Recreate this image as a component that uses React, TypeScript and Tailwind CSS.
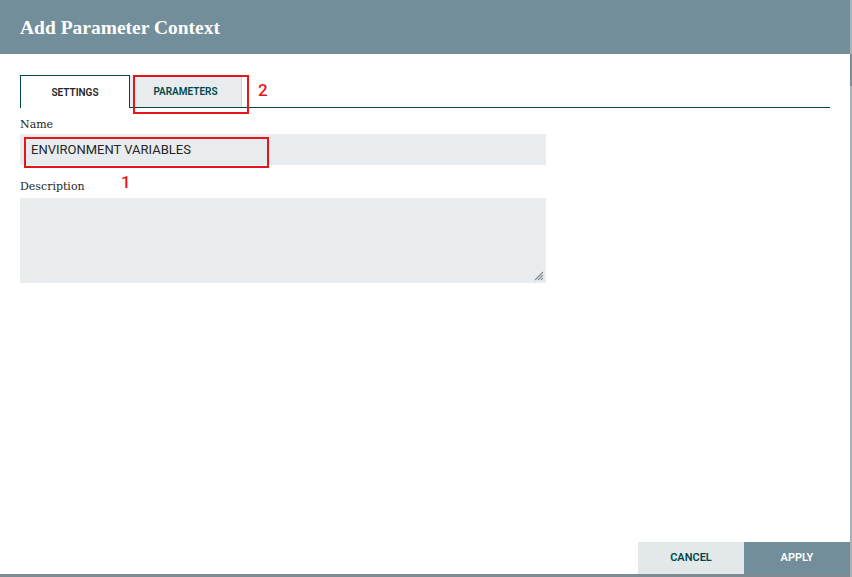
export default function App() {
  return (
    <div className="flex h-[577px] w-[852px] overflow-hidden bg-white font-['Roboto',sans-serif] text-[#262626]">
      <div className="flex flex-1 flex-col">
        <header className="flex h-[54px] items-center bg-[#728e9b] px-5 pt-[2px]">
          <h1 className="font-['Liberation_Serif',serif] text-[19.5px] font-bold text-white">
            Add Parameter Context
          </h1>
        </header>

        <main className="relative flex-1 pl-5 pr-[20px] pt-[21px]">
          <div className="flex h-[33px]">
            <div className="flex w-[110px] items-center justify-center border border-b-0 border-[#004849] bg-white text-[10px] font-semibold">
              SETTINGS
            </div>
            <div className="flex flex-1 flex-col">
              <div className="flex flex-1 items-start">
                <div className="flex h-[32px] w-[112px] items-center justify-center border-r border-[#cfd3d6] bg-[#e9ecee] text-[10px] font-semibold text-[#004849]">
                  PARAMETERS
                </div>
              </div>
              <div className="h-px bg-[#004849]" />
            </div>
          </div>

          <label className="mt-[9px] block font-['DejaVu_Serif',serif] text-[11px] leading-[16px]">Name</label>
          <div className="mt-[1px] flex h-[31px] w-[526px] items-center bg-[#e9ecef] px-[11px] text-[13px]">
            ENVIRONMENT VARIABLES
          </div>

          <label className="mt-[14px] block font-['DejaVu_Serif',serif] text-[11px] leading-[16px]">Description</label>
          <div className="relative mt-[3px] h-[85px] w-[526px] bg-[#e9ecef]">
            <svg className="absolute bottom-[2px] right-[2px]" width="10" height="10" viewBox="0 0 10 10">
              <path d="M9 1L1 9M9 4L4 9M9 7L7 9" stroke="#8a8f93" strokeWidth="1.2" />
            </svg>
          </div>

          <div className="absolute left-[133px] top-[21px] h-[39px] w-[116px] border-2 border-[#e8141c]" />
          <span className="absolute left-[258px] top-[24px] text-[17px] font-medium text-[#e8141c]">2</span>
          <div className="absolute left-[24px] top-[83px] h-[31px] w-[245px] border-2 border-[#e8141c]" />
          <span className="absolute left-[121px] top-[116px] text-[17px] font-medium text-[#e8141c]">1</span>
        </main>

        <footer className="flex justify-end">
          <button className="h-[32px] w-[106px] bg-[#e3e8eb] text-[11px] font-semibold text-[#004849]">CANCEL</button>
          <button className="h-[32px] w-[106px] bg-[#728e9b] text-[11px] font-semibold text-white">APPLY</button>
        </footer>
        <div className="h-[3px] bg-[#7d8b93]" />
      </div>
      <div className="flex w-[2px] flex-col">
        <div className="h-[54px] bg-[#a7b4ba]" />
        <div className="h-[32px] bg-[#7d8e96]" />
        <div className="flex-1 bg-[#a9b1b5]" />
      </div>
    </div>
  );
}
